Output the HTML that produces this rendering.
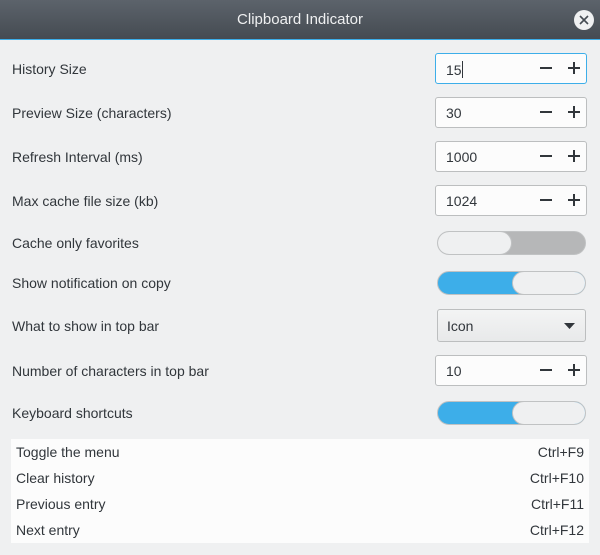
<!DOCTYPE html>
<html><head><style>
*{box-sizing:border-box;margin:0;padding:0}
body{width:600px;height:555px;background:#eff0f1;font-family:"Liberation Sans",sans-serif;font-size:14px;color:#31363b;position:relative;overflow:hidden}
.title{position:absolute;left:0;top:0;width:600px;height:40px;background:linear-gradient(#5c636b,#454b52);color:#eff0f1;text-align:center;line-height:40px;font-size:15px;border-bottom:1px solid #3daee9}
.close{position:absolute;left:574px;top:10px;width:20px;height:20px;border-radius:50%;background:#eff0f1}
.lbl{position:absolute;left:12px}
.spin{position:absolute;left:435px;width:152px;height:31px;background:#fcfcfc;border:1px solid #bcbebf;border-radius:3px}
.spin span{position:absolute;left:10px;top:7px}
.spin .m,.spin .p{position:absolute;top:8px;width:12px;height:12px}
.m{left:104px}.p{left:132px}
.m:before,.p:before,.p:after{content:"";position:absolute;background:#31363b}
.m:before,.p:before{left:0;top:5px;width:12px;height:2px}
.p:after{left:5px;top:0;width:2px;height:12px}
.sw{position:absolute;left:437px;width:149px;height:24px;border-radius:12px;border:1px solid #c0c2c3;overflow:hidden}
.knob{position:absolute;top:-1px;height:24px;width:75px;border-radius:12px;background:#eff0f1;border:1px solid #c0c2c3}
.tbl{position:absolute;left:11px;top:439px;width:578px;height:104px;background:#fcfcfc}
.tbl div{position:absolute;left:5px;right:5px}
.tbl b{position:absolute;right:0;font-weight:normal}
</style></head><body>
<div class="title">Clipboard Indicator</div>
<div class="close"><svg width="20" height="20"><path d="M6 6L14 14M14 6L6 14" stroke="#454b52" stroke-width="1.6"/></svg></div>

<div class="lbl" style="top:61px">History Size</div>
<div class="spin" style="top:53px;border-color:#3daee9"><span>15<i style="display:inline-block;width:1px;height:17px;background:#31363b;vertical-align:-3px"></i></span><i class="m"></i><i class="p"></i></div>
<div class="lbl" style="top:105px">Preview Size (characters)</div>
<div class="spin" style="top:97px"><span>30</span><i class="m"></i><i class="p"></i></div>
<div class="lbl" style="top:149px">Refresh Interval (ms)</div>
<div class="spin" style="top:141px"><span>1000</span><i class="m"></i><i class="p"></i></div>
<div class="lbl" style="top:193px">Max cache file size (kb)</div>
<div class="spin" style="top:185px"><span>1024</span><i class="m"></i><i class="p"></i></div>

<div class="lbl" style="top:235px">Cache only favorites</div>
<div class="sw" style="top:231px;background:#b6b7b8"><div class="knob" style="left:-1px"></div></div>
<div class="lbl" style="top:275px">Show notification on copy</div>
<div class="sw" style="top:271px;background:#3daee9;border-color:#c0c2c3"><div class="knob" style="left:74px"></div></div>

<div class="lbl" style="top:318px">What to show in top bar</div>
<div style="position:absolute;left:437px;top:309px;width:149px;height:33px;border:1px solid #bcbebf;border-radius:3px;background:linear-gradient(#f3f4f4,#e8e9ea)"><span style="position:absolute;left:9px;top:8px">Icon</span><svg style="position:absolute;left:126px;top:13px" width="12" height="7"><path d="M0 0H11L5.5 6Z" fill="#31363b"/></svg></div>

<div class="lbl" style="top:363px">Number of characters in top bar</div>
<div class="spin" style="top:355px"><span>10</span><i class="m"></i><i class="p"></i></div>

<div class="lbl" style="top:405px">Keyboard shortcuts</div>
<div class="sw" style="top:401px;background:#3daee9;border-color:#c0c2c3"><div class="knob" style="left:74px"></div></div>

<div class="tbl">
<div style="top:5px">Toggle the menu<b>Ctrl+F9</b></div>
<div style="top:31px">Clear history<b>Ctrl+F10</b></div>
<div style="top:57px">Previous entry<b>Ctrl+F11</b></div>
<div style="top:83px">Next entry<b>Ctrl+F12</b></div>
</div>
</body></html>
